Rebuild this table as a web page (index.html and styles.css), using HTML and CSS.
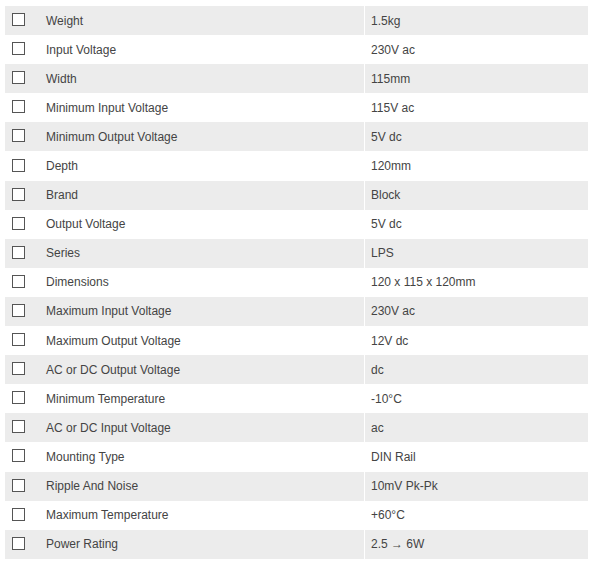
FILE: index.html
```html
<!DOCTYPE html>
<html>
<head>
<meta charset="utf-8">
<link rel="stylesheet" href="styles.css">
</head>
<body>
<div class="specs">
  <div class="row"><div class="name"><span class="box"></span>Weight</div><div class="val">1.5kg</div></div>
  <div class="row"><div class="name"><span class="box"></span>Input Voltage</div><div class="val">230V ac</div></div>
  <div class="row"><div class="name"><span class="box"></span>Width</div><div class="val">115mm</div></div>
  <div class="row"><div class="name"><span class="box"></span>Minimum Input Voltage</div><div class="val">115V ac</div></div>
  <div class="row"><div class="name"><span class="box"></span>Minimum Output Voltage</div><div class="val">5V dc</div></div>
  <div class="row"><div class="name"><span class="box"></span>Depth</div><div class="val">120mm</div></div>
  <div class="row"><div class="name"><span class="box"></span>Brand</div><div class="val">Block</div></div>
  <div class="row"><div class="name"><span class="box"></span>Output Voltage</div><div class="val">5V dc</div></div>
  <div class="row"><div class="name"><span class="box"></span>Series</div><div class="val">LPS</div></div>
  <div class="row"><div class="name"><span class="box"></span>Dimensions</div><div class="val">120 x 115 x 120mm</div></div>
  <div class="row"><div class="name"><span class="box"></span>Maximum Input Voltage</div><div class="val">230V ac</div></div>
  <div class="row"><div class="name"><span class="box"></span>Maximum Output Voltage</div><div class="val">12V dc</div></div>
  <div class="row"><div class="name"><span class="box"></span>AC or DC Output Voltage</div><div class="val">dc</div></div>
  <div class="row"><div class="name"><span class="box"></span>Minimum Temperature</div><div class="val">-10°C</div></div>
  <div class="row"><div class="name"><span class="box"></span>AC or DC Input Voltage</div><div class="val">ac</div></div>
  <div class="row"><div class="name"><span class="box"></span>Mounting Type</div><div class="val">DIN Rail</div></div>
  <div class="row"><div class="name"><span class="box"></span>Ripple And Noise</div><div class="val">10mV Pk-Pk</div></div>
  <div class="row"><div class="name"><span class="box"></span>Maximum Temperature</div><div class="val">+60°C</div></div>
  <div class="row"><div class="name"><span class="box"></span>Power Rating</div><div class="val">2.5 → 6W</div></div>
</div>
</body>
</html>
```
FILE: styles.css
```css
html, body {
  margin: 0;
  padding: 0;
  background: #fff;
}
body {
  font-family: "Liberation Sans", Arial, sans-serif;
  font-size: 12px;
  color: #444;
}
.specs {
  margin: 6px 0 0 5px;
  width: 583px;
  display: flex;
  flex-direction: column;
}
.row {
  display: grid;
  grid-template-columns: 359px 223px;
  column-gap: 1px;
  height: 29.1px;
}
.row:nth-child(odd) .name,
.row:nth-child(odd) .val {
  background: #ececec;
}
.name, .val {
  display: flex;
  align-items: center;
}
.name {
  padding-left: 7px;
}
.val {
  padding-left: 6px;
}
.box {
  width: 11px;
  height: 11px;
  border: 1px solid #555;
  background: #fff;
  margin-right: 21px;
  margin-top: -2px;
  flex: none;
}
```
